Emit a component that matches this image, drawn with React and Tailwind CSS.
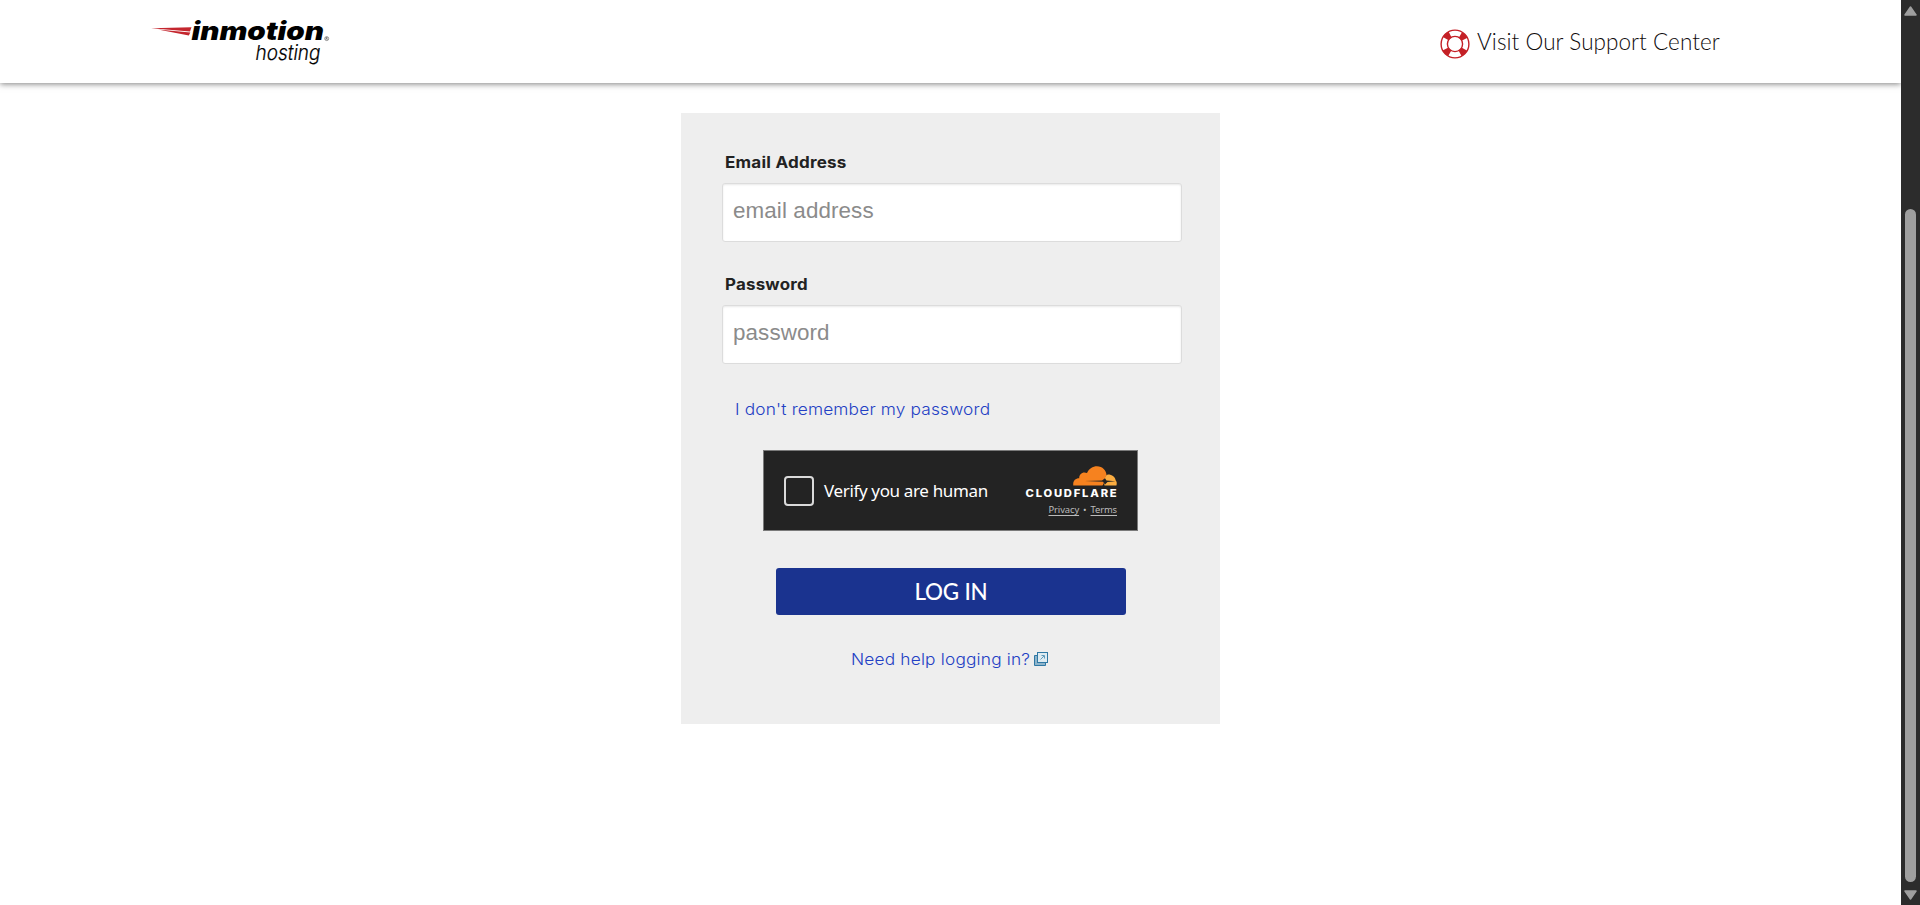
import React from "react";

function Logo() {
  return (
    <svg className="block h-[50px] w-[184px] overflow-visible" viewBox="148 18 184 50" role="img" aria-label="inmotion hosting">
      <path d="M151 28.2 L191.5 27.2 L190 31.4 Z" fill="#c4262e" />
      <path d="M158 29.6 L190.3 32.4 L188.8 35.6 Z" fill="#c4262e" />
      <text x="191.5" y="40.3" textLength="132.5" lengthAdjust="spacingAndGlyphs" fontFamily="Inter, sans-serif" fontStyle="italic" fontWeight="900" fontSize="25" fill="#000">inmotion</text>
      <text x="255.5" y="60.3" textLength="65" lengthAdjust="spacingAndGlyphs" fontFamily="Inter, sans-serif" fontStyle="italic" fontWeight="300" fontSize="20.5" fill="#000" stroke="#000" strokeWidth="0.2">hosting</text>
      <circle cx="326.7" cy="38.6" r="2" fill="none" stroke="#555" strokeWidth="0.6" />
      <path d="M326 39.8V37.5H327.2V38.6H326M326.7 38.6L327.5 39.8" fill="none" stroke="#444" strokeWidth="0.5" />
    </svg>
  );
}

function LifeRing() {
  return (
    <svg className="block h-[30px] w-[30px]" viewBox="0 0 30 30" fill="none" stroke="#c42026">
      <circle cx="15" cy="15" r="13.9" strokeWidth="1.4" />
      <circle cx="15" cy="15" r="7.6" strokeWidth="1.4" />
      <circle cx="15" cy="15" r="10.7" strokeWidth="6.6" strokeDasharray="6 10.807" strokeDashoffset="-5.4" />
    </svg>
  );
}

function Cloud() {
  return (
    <svg className="block h-5 w-[44px]" viewBox="0 0 44 20">
      <path d="M31.5 19.5 C30.5 15 31.3 9 35 8.6 C39.2 8.6 42.2 11.3 42.6 14.2 C44 15.5 44 17.8 43.4 19.5 Z" fill="#fbad41" />
      <path d="M0.3 19.5 C-0.3 15 2.2 12.3 6.2 12.3 C6.1 7.7 10 5.2 14 7 C16 2.6 19.8 0.3 24 0.3 C29.5 0.4 33.3 4.3 33.5 9.1 C31.6 11.4 32.5 15.5 29.5 19.5 Z" fill="#f6821f" />
      <path d="M12 15 L29 14.6 L32 12.2 L33.5 14.6 L42.5 15.2 L34.5 16 L32 18.6 L30 15.7 Z" fill="#232323" />
    </svg>
  );
}

function ExternalIcon() {
  return (
    <svg className="block h-[14px] w-[14px]" viewBox="0 0 14 14">
      <path d="M.5 3.5H3.5V10.5H11.5V13.5H.5Z" fill="#8db4cb" stroke="#2f78a4" />
      <path d="M1 4H3V11H11V13H1Z" fill="#8db4cb" />
      <rect x="3.5" y=".5" width="10" height="10" fill="#deebf1" stroke="#2f78a4" />
      <path d="M6.5 7.5L10 4M7.5 3.5H10.5V6.5" fill="none" stroke="#5f9abb" strokeWidth="1" />
    </svg>
  );
}

function Field({ label, type, placeholder, stretch }) {
  return (
    <label className="block h-[122px]">
      <span className="block h-[34px] pl-[3px] pt-px">
        <span className={"inline-block origin-left whitespace-nowrap text-[15.5px] leading-[22px] font-bold tracking-[0.2px] text-[#222] " + stretch}>{label}</span>
      </span>
      <input
        type={type}
        placeholder={placeholder}
        className="block h-[59px] w-[460px] rounded-[3px] border border-[#dcdcdc] bg-white px-[10px] pb-[3px] font-['Liberation_Sans',Arial,sans-serif] text-[22.4px] tracking-[0.1px] shadow-[inset_0_1px_2px_rgba(0,0,0,0.09)] outline-none placeholder:text-[#8b8b8b] placeholder:opacity-100"
      />
    </label>
  );
}

function Turnstile() {
  return (
    <div className="ml-[82px] flex h-[81px] w-[375px] border border-[#7a7a7a] bg-[#232323]">
      <div className="ml-5 mt-[25px] h-[30px] w-[30px] shrink-0 rounded-[4px] border-2 border-[#dadada]" />
      <div className="ml-[10px] mt-[28px] w-[201px] shrink-0 whitespace-nowrap font-['Noto_Sans',sans-serif] text-[17px] leading-6 tracking-[-0.35px] text-white">Verify you are human</div>
      <div className="flex w-[92px] shrink-0 flex-col items-end pt-[15px]">
        <Cloud />
        <svg className="mt-[3px] block h-[9px] w-[92px] shrink-0 overflow-visible" viewBox="0 0 92 9">
          <text x="0.5" y="8" textLength="93" lengthAdjust="spacingAndGlyphs" fontFamily="Inter, sans-serif" fontWeight="800" fontSize="10" letterSpacing="1.6" fill="#fff">CLOUDFLARE</text>
        </svg>
        <div className="mt-[6px] flex items-center gap-[4px] font-['Noto_Sans',sans-serif] text-[9.4px] leading-[12px] tracking-[-0.1px] text-[#bbb]">
          <a className="underline underline-offset-[1.5px]">Privacy</a>
          <span>•</span>
          <a className="underline underline-offset-[1.5px]">Terms</a>
        </div>
      </div>
    </div>
  );
}

export default function App() {
  return (
    <div className="flex h-[905px] w-full overflow-hidden bg-white font-[Inter,sans-serif]">
      <div className="flex w-[1901px] flex-col overflow-hidden">
        <header className="flex h-[83px] shrink-0 items-start justify-between bg-white pl-[148px] pr-[181px] shadow-[0_1px_6px_rgba(0,0,0,0.5)]">
          <div className="pt-[18px]"><Logo /></div>
          <a className="flex gap-[7px]">
            <span className="pt-[28.5px]"><LifeRing /></span>
            <span className="w-[243px] whitespace-nowrap pt-[26px] font-[Lato,sans-serif] text-[22.5px] leading-[32px] font-light tracking-[0.06px] text-[#100c0d]">Visit Our Support Center</span>
          </a>
        </header>
        <main className="ml-[681px] mt-[30px] h-[611px] w-[539px] bg-[#eeeeee]">
          <div className="ml-[41px] pt-9">
            <Field label="Email Address" type="text" placeholder="email address" stretch="scale-x-[1.1]" />
            <Field label="Password" type="password" placeholder="password" stretch="scale-x-[1.09]" />
          </div>
          <div className="h-[57px] pl-[54px] pt-1">
            <a className="inline-block origin-left scale-x-[1.08] whitespace-nowrap text-[16px] leading-6 font-light tracking-[0.16px] text-[#2340c4]">I don't remember my password</a>
          </div>
          <Turnstile />
          <button className="ml-[95px] mt-[37px] block h-[47px] w-[350px] rounded-[3px] bg-[#1a338f] font-[Lato,sans-serif] text-[22.4px] leading-[48px] font-medium tracking-[-0.2px] text-white">LOG IN</button>
          <a className="ml-[170px] mt-[32px] flex h-6 items-center text-[#2340c4]">
            <span className="w-[183px] shrink-0"><span className="inline-block origin-left scale-x-[1.08] whitespace-nowrap text-[16px] leading-6 font-light tracking-[0.17px]">Need help logging in?</span></span>
            <ExternalIcon />
          </a>
        </main>
      </div>
      <div className="flex h-full w-[19px] flex-col items-center bg-[#2c2c2c]">
        <svg className="mt-[6px] block h-[10px] w-[13px] shrink-0" viewBox="0 0 13 10"><path d="M6.5 1L12 9H1Z" fill="#9f9f9f" stroke="#9f9f9f" strokeWidth="1.5" strokeLinejoin="round" /></svg>
        <div className="mt-[193px] h-[673px] w-[11px] shrink-0 rounded-full bg-[#9f9f9f]" />
        <svg className="mt-[8px] block h-[10px] w-[13px] shrink-0" viewBox="0 0 13 10"><path d="M6.5 9L12 1H1Z" fill="#9f9f9f" stroke="#9f9f9f" strokeWidth="1.5" strokeLinejoin="round" /></svg>
      </div>
    </div>
  );
}
